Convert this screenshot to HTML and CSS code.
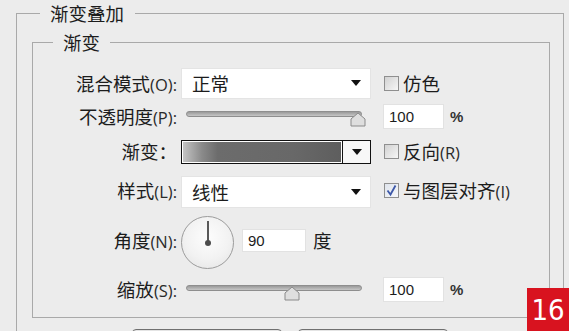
FILE: index.html
```html
<!DOCTYPE html>
<html lang="zh-CN">
<head>
    <meta charset="UTF-8">
    <title>渐变叠加</title>
    <link rel="stylesheet" href="styles.css">
</head>
<body>
    <fieldset class="group outer">
        <legend>渐变叠加</legend>

        <fieldset class="group inner">
            <legend>渐变</legend>

            <div class="form">
                <!-- 混合模式 -->
                <label class="lbl">混合模式<span class="key">(O):</span></label>
                <div class="select">
                    <span>正常</span>
                    <span class="arrow"></span>
                </div>
                <div class="side">
                    <span class="check"></span>
                    <span>仿色</span>
                </div>

                <!-- 不透明度 -->
                <label class="lbl">不透明度<span class="key">(P):</span></label>
                <div class="slider slider-top">
                    <div class="track"></div>
                    <svg class="thumb" style="left: 164px" width="16" height="15" viewBox="0 0 16 15">
                        <path d="M8 1 L15 7 L15 14 L1 14 L1 7 Z" fill="#dedede" stroke="#8a8a8a" stroke-width="1" stroke-linejoin="round"/>
                    </svg>
                </div>
                <div class="side">
                    <span class="num">100</span>
                    <span class="pct">%</span>
                </div>

                <!-- 渐变 -->
                <label class="lbl">渐变：</label>
                <div class="gradient">
                    <div class="swatch"></div>
                    <div class="drop"><span class="arrow"></span></div>
                </div>
                <div class="side">
                    <span class="check"></span>
                    <span>反向<span class="key">(R)</span></span>
                </div>

                <!-- 样式 -->
                <label class="lbl">样式<span class="key">(L):</span></label>
                <div class="select select-tall">
                    <span>线性</span>
                    <span class="arrow"></span>
                </div>
                <div class="side">
                    <span class="check checked">
                        <svg width="13" height="13" viewBox="0 0 13 13">
                            <path d="M2.5 6.5 L5.5 10.5 L10.5 1.5" fill="none" stroke="#3d58a8" stroke-width="1.8"/>
                        </svg>
                    </span>
                    <span>与图层对齐<span class="key">(I)</span></span>
                </div>

                <!-- 角度 -->
                <label class="lbl">角度<span class="key">(N):</span></label>
                <div class="angle">
                    <div class="dial">
                        <span class="hand"></span>
                        <span class="dot"></span>
                    </div>
                    <span class="num num-angle">90</span>
                    <span>度</span>
                </div>
                <div></div>

                <!-- 缩放 -->
                <label class="lbl">缩放<span class="key">(S):</span></label>
                <div class="slider slider-bottom">
                    <div class="track"></div>
                    <svg class="thumb" style="left: 98px" width="16" height="15" viewBox="0 0 16 15">
                        <path d="M8 1 L15 7 L15 14 L1 14 L1 7 Z" fill="#dedede" stroke="#8a8a8a" stroke-width="1" stroke-linejoin="round"/>
                    </svg>
                </div>
                <div class="side">
                    <span class="num">100</span>
                    <span class="pct">%</span>
                </div>
            </div>
        </fieldset>

        <div class="buttons">
            <button class="btn"></button>
            <button class="btn"></button>
        </div>
    </fieldset>

    <div class="badge">16</div>
</body>
</html>
```

FILE: styles.css
```css
body {
    margin: 0;
    height: 331px;
    overflow: hidden;
    background-color: #ececec;
    font-family: "Noto Sans CJK SC", "Noto Sans", sans-serif;
    font-size: 18.5px;
    color: #1c1c1c;
}

/* group boxes */
.group {
    border: 1px solid #a9a9a9;
    padding: 0;
    min-width: 0;
}

.group legend {
    line-height: 22px;
    padding: 0 11px 0 10px;
}

.outer {
    margin: 2px 5px 0 16px;
    padding-top: 7px;
}

.outer > legend {
    margin-left: 23px;
}

.inner {
    margin: 0 13px 0 15px;
    padding: 14px 0 8px 0;
}

.inner > legend {
    margin-left: 20px;
    padding: 0 10px;
}

/* form grid */
.form {
    display: grid;
    grid-template-columns: 148px 190px 1fr;
    grid-template-rows: 32px 34px 36px 42px 58px 40px;
    align-items: center;
}

.lbl {
    text-align: right;
    padding-right: 4px;
    white-space: nowrap;
}

.key {
    font-family: "Open Sans", "Noto Sans", sans-serif;
    font-size: 16.5px;
    color: #2a2a2a;
}

.side {
    display: flex;
    align-items: center;
    padding-left: 12px;
}

/* dropdowns */
.select {
    height: 31px;
    box-sizing: border-box;
    background: #fff;
    border: 1px solid #e4e4e4;
    display: flex;
    align-items: center;
    justify-content: space-between;
    padding: 0 9px 0 10px;
}

.select-tall {
    height: 32px;
    margin-top: 4px;
}

.arrow {
    width: 0;
    height: 0;
    border-left: 5px solid transparent;
    border-right: 5px solid transparent;
    border-top: 6px solid #111;
}

/* gradient picker */
.gradient {
    height: 24px;
    margin-top: 1px;
    box-sizing: border-box;
    border: 1px solid #111;
    display: flex;
    background: #fff;
}

.swatch {
    flex: 1;
    margin: 1px;
    background: linear-gradient(to right, #c4c4c4 0%, #8a8a8a 12%, #6c6c6c 22%, #686868 70%, #5e5e5e 100%);
}

.drop {
    width: 27px;
    border-left: 1px solid #111;
    background: #f7f7f7;
    display: flex;
    align-items: center;
    justify-content: center;
}

/* checkboxes */
.check {
    width: 15px;
    height: 15px;
    box-sizing: border-box;
    border: 1px solid #8f8f8f;
    background: linear-gradient(135deg, #d2d2d2, #f6f6f6);
    margin: 0 4px 0 1px;
    display: flex;
    align-items: center;
    justify-content: center;
}

.checked {
    background: linear-gradient(135deg, #dfe4ec, #f6f7fa);
}

/* numeric fields */
.num {
    width: 61px;
    height: 25px;
    box-sizing: border-box;
    background: #fff;
    border: 1px solid #e2e2e2;
    font-family: "Liberation Sans", Arial, sans-serif;
    font-size: 15px;
    line-height: 23px;
    padding-left: 5px;
}

.pct {
    margin-left: 6px;
    font-family: "Liberation Sans", Arial, sans-serif;
    font-size: 15px;
    font-weight: bold;
    color: #333;
}

/* sliders */
.slider {
    position: relative;
    width: 176px;
    height: 17px;
    margin-left: 5px;
    align-self: start;
}

.slider-top {
    margin-top: 12px;
}

.slider-bottom {
    margin-top: 16px;
}

.track {
    height: 6px;
    box-sizing: border-box;
    border: 1px solid #8e8e8e;
    border-radius: 3px;
    background: linear-gradient(#9a9a9a, #c6c6c6);
}

.thumb {
    position: absolute;
    top: 1px;
}

/* angle dial */
.angle {
    display: flex;
    align-items: center;
}

.dial {
    position: relative;
    width: 53px;
    height: 53px;
    box-sizing: border-box;
    margin-top: 4px;
    border: 1px solid #9c9c9c;
    border-radius: 50%;
    background: radial-gradient(circle at 50% 40%, #fdfdfd 0%, #f2f2f2 55%, #e2e2e2 100%);
}

.hand {
    position: absolute;
    left: 25px;
    top: 4px;
    width: 2px;
    height: 22px;
    background: #5a5a5a;
}

.dot {
    position: absolute;
    left: 23px;
    top: 23px;
    width: 6px;
    height: 6px;
    border-radius: 50%;
    background: #4c4c4c;
}

.num-angle {
    width: 64px;
    height: 23px;
    line-height: 21px;
    margin: 0 7px 0 8px;
}

/* dialog buttons */
.buttons {
    display: flex;
    gap: 16px;
    margin: 11px 0 0 115px;
}

.btn {
    width: 150px;
    height: 30px;
    border: 1px solid #707070;
    border-radius: 4px;
    background: #e4e4e4;
}

/* page number */
.badge {
    position: absolute;
    right: 0;
    bottom: 0;
    width: 42px;
    height: 43px;
    background: #d8131f;
    color: #fff;
    font-family: "Liberation Sans Narrow", "DejaVu Sans Condensed", sans-serif;
    font-stretch: condensed;
    font-size: 29px;
    line-height: 44px;
    text-align: center;
}
```
